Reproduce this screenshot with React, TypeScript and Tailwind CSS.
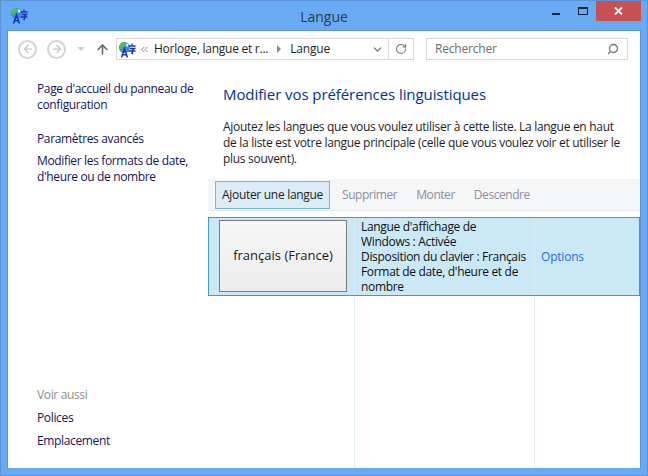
import { ArrowLeft, ArrowRight, ArrowUp, ChevronDown, ChevronsLeft, RotateCw, Search } from "lucide-react";

const font = "font-['Open_Sans','Noto_Sans',sans-serif]";

// ---------------------------------------------------------------------------
// Small drawings
// ---------------------------------------------------------------------------

function LangIcon() {
  return (
    <svg width="18" height="17" viewBox="0 0 18 17">
      <circle cx="6.5" cy="6.5" r="5.5" fill="#2f8fd8" />
      <path d="M2 3.5C3.5 1 6.5.5 8 2s-1 3-2.500 3.500S4.500 8 3 8 1 5.500 2 3.500z" fill="#58bd4c" />
      <path d="M8.500 2l2 1.500-1 2.500-1.500-1z" fill="#dff1ff" />
      <path d="M3.500 16.500L6.500 8l3 8.500M4.600 13.800h3.800" fill="none" stroke="#1f2fb0" strokeWidth="1.500" />
      <path d="M11 5h6.500M14 2.500V4M12 7.500h4.500l-2 1.500v3.500l-1.500-.5M10.500 10h7" fill="none" stroke="#1f2fb0" strokeWidth="1.300" />
    </svg>
  );
}

function NavButton({ children }: { children: React.ReactNode }) {
  return (
    <div className="flex h-[19px] w-[19px] items-center justify-center rounded-full border-2 border-[#d4d4d4] text-[#c4c4c4]">
      {children}
    </div>
  );
}

// ---------------------------------------------------------------------------
// Title bar + address bar
// ---------------------------------------------------------------------------

function TitleBar() {
  return (
    <div className="flex h-[29px] shrink-0 items-start">
      <div className="ml-[9px] mt-[6px]">
        <LangIcon />
      </div>
      <div className="flex h-[30px] flex-1 items-center justify-center pl-[68px] text-[14px] text-[#2b3a4f]">
        Langue
      </div>
      <div className="mr-[18px] mt-[12px] h-[2px] w-[8px] bg-[#1c2530]" />
      <div className="mr-[8px] mt-[6px] h-[8px] w-[10px] border border-t-2 border-[#1c2530]" />
      <div className="mr-[6px] flex h-[20px] w-[45px] items-center justify-center bg-[#c75050]">
        <svg width="9" height="8" viewBox="0 0 9 8">
          <path d="M1 0.5L8 7.5M8 0.5L1 7.5" stroke="#fff" strokeWidth="1.800" />
        </svg>
      </div>
    </div>
  );
}

function AddressBar() {
  return (
    <div className="flex h-[22px] items-center">
      <div className="ml-[10px]">
        <NavButton>
          <ArrowLeft size={12} strokeWidth={2.5} />
        </NavButton>
      </div>
      <div className="ml-[10px]">
        <NavButton>
          <ArrowRight size={12} strokeWidth={2.5} />
        </NavButton>
      </div>
      <div className="ml-[11px] h-0 w-0 border-x-[4px] border-t-[4px] border-x-transparent border-t-[#d0d0d0]" />
      <ArrowUp size={15} strokeWidth={2.6} className="ml-[10px] text-[#6d6d6d]" />
      <div className="ml-[6px] flex h-[22px] w-[298px] items-center border border-[#d9d9d9] text-[12px] text-[#1e1e1e]">
        <div className="ml-[1px] flex">
          <LangIcon />
        </div>
        <ChevronsLeft size={11} strokeWidth={1.8} className="ml-[3px] text-[#777]" />
        <span className="ml-[4px] tracking-[-0.25px]">Horloge, langue et r...</span>
        <span className="ml-[9px] h-0 w-0 border-y-[4px] border-l-[4px] border-y-transparent border-l-[#8a8a8a]" />
        <span className="ml-[9px] tracking-[-0.2px]">Langue</span>
        <ChevronDown size={13} strokeWidth={2.2} className="ml-auto mr-[4px] text-[#6d6d6d]" />
        <div className="flex h-full w-[25px] items-center justify-center border-l border-[#d9d9d9]">
          <RotateCw size={12} strokeWidth={2.2} className="text-[#777]" />
        </div>
      </div>
      <div className="ml-[12px] flex h-[22px] w-[202px] items-center justify-between border border-[#d9d9d9] pl-[8px] pr-[8px] text-[12px] text-[#6d6d6d]">
        <span className="tracking-[-0.2px]">Rechercher</span>
        <Search size={12} strokeWidth={2.6} className="-scale-x-100 text-[#777]" />
      </div>
    </div>
  );
}

// ---------------------------------------------------------------------------
// Left column + main pane
// ---------------------------------------------------------------------------

function Sidebar() {
  return (
    <div className="flex w-[200px] shrink-0 flex-col pb-[19px] pl-[29px] pt-[21px] text-[12px] leading-[16px] tracking-[-0.35px] text-[#14145c]">
      <p>Page d'accueil du panneau de configuration</p>
      <p className="mt-[18px]">Paramètres avancés</p>
      <p className="mt-[6px]">Modifier les formats de date, d'heure ou de nombre</p>
      <p className="mt-auto text-[#8c8c8c]">Voir aussi</p>
      <p className="mt-[7px]">Polices</p>
      <p className="mt-[7px]">Emplacement</p>
    </div>
  );
}

function LanguageRow() {
  return (
    <div className="flex h-[79px] border border-[#3d9ad1] bg-[#cbe8f6]">
      <div className="w-[145px] shrink-0 py-[2px] pl-[10px]">
        <div className="flex h-[72px] w-[128px] items-center justify-center border border-[#7a7a7a] bg-gradient-to-b from-[#f6f6f6] to-[#ececec] text-[13px] text-[#1a1a1a]">
          français (France)
        </div>
      </div>
      <div className="w-[180px] shrink-0 border-l border-[#d8edf9] pl-[6px] pt-[1px] text-[12px] leading-[15px] tracking-[-0.32px] text-[#111]">
        Langue d'affichage de
        <br />
        Windows : Activée
        <br />
        Disposition du clavier : Français
        <br />
        Format de date, d'heure et de
        <br />
        nombre
      </div>
      <div className="flex flex-1 items-center border-l border-[#d8edf9] pl-[6px] text-[12px] tracking-[-0.2px] text-[#1f6fd0]">
        Options
      </div>
    </div>
  );
}

function MainPane() {
  return (
    <div className="relative flex min-w-0 flex-1 flex-col">
      {/* Faint column dividers that run past the row */}
      <div className="absolute bottom-0 left-[146px] top-[186px] w-px bg-[#e3effb]" />
      <div className="absolute bottom-0 left-[326px] top-[186px] w-px bg-[#e3effb]" />

      <h1 className="ml-[15px] mt-[23px] text-[15px] leading-[22px] tracking-[-0.08px] text-[#003399]">
        Modifier vos préférences linguistiques
      </h1>
      <p className="ml-[15px] mt-[14px] w-[398px] text-[12px] leading-[16px] tracking-[-0.3px] text-[#1e1e1e]">
        Ajoutez les langues que vous voulez utiliser à cette liste. La langue en haut de la liste est votre langue principale (celle que vous voulez voir et utiliser le plus souvent).
      </p>
      <div className="mt-[12px] flex h-[32px] items-center border-b border-[#e8eaec] bg-[#f5f6f7] pl-[7px] text-[12px] tracking-[-0.45px] text-[#8d8fa0]">
        <div className="flex h-[28px] w-[115px] items-center justify-center border border-[#6fb8e0] bg-[#dcecf6] tracking-[-0.3px] text-[#1e1e1e]">
          Ajouter une langue
        </div>
        <span className="ml-[12px]">Supprimer</span>
        <span className="ml-[19px]">Monter</span>
        <span className="ml-[19px]">Descendre</span>
      </div>
      <div className="relative mt-[6px]">
        <LanguageRow />
      </div>
    </div>
  );
}

export default function App() {
  return (
    <div className={`flex h-[476px] w-[648px] flex-col overflow-hidden border border-[#5b92d8] bg-[#69aaf5] ${font}`}>
      <TitleBar />
      <div className="mb-[7px] ml-[6px] mr-[6px] flex min-h-0 flex-1 flex-col border-l border-r border-t border-[#5b92d8] bg-white">
        <div className="pt-[7px]">
          <AddressBar />
        </div>
        <div className="flex min-h-0 flex-1">
          <Sidebar />
          <MainPane />
        </div>
      </div>
    </div>
  );
}
